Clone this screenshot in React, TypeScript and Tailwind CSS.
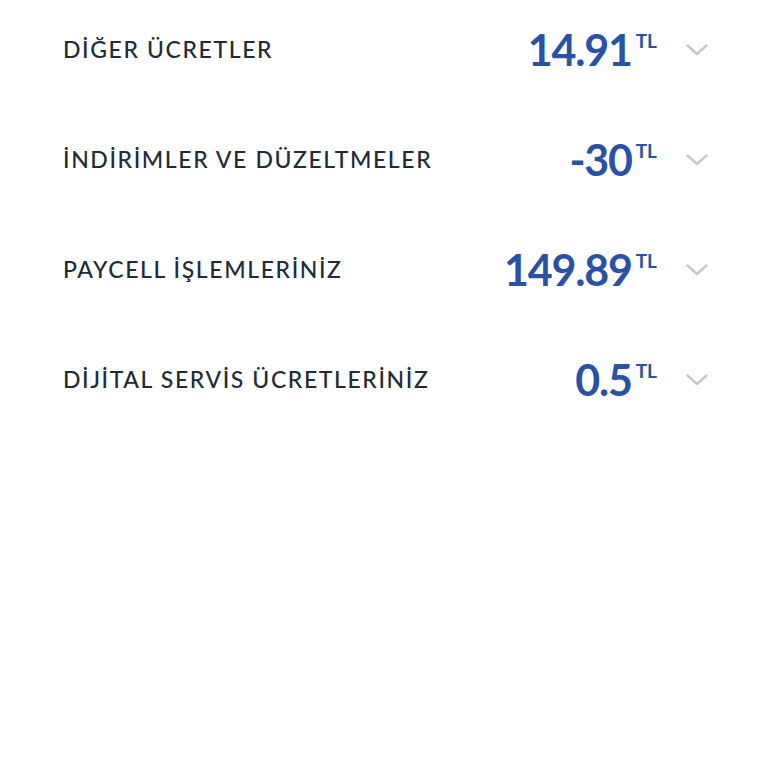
const rows = [
  { label: "DİĞER ÜCRETLER", amount: "14.91" },
  { label: "İNDİRİMLER VE DÜZELTMELER", amount: "-30" },
  { label: "PAYCELL İŞLEMLERİNİZ", amount: "149.89" },
  { label: "DİJİTAL SERVİS ÜCRETLERİNİZ", amount: "0.5" },
];

function Chevron() {
  return (
    <svg width="22" height="12" viewBox="0 0 22 12" className="ml-[29px] mt-[2px]">
      <polyline
        points="1.5,1.5 11,10 20.5,1.5"
        fill="none"
        stroke="#c8c8c8"
        strokeWidth="2.4"
        strokeLinecap="round"
        strokeLinejoin="round"
      />
    </svg>
  );
}

export default function App() {
  return (
    <div
      className="w-[768px] h-[768px] bg-white"
      style={{ fontFamily: "Lato, 'Open Sans', sans-serif" }}
    >
      <div className="flex flex-col gap-[12px] pl-[63px] pr-[60px]">
        {rows.map((row) => (
          <div key={row.label} className="flex items-center h-[98px]">
            <span className="flex-1 text-[23px] tracking-[1.6px] text-[#222b38] font-medium">
              {row.label}
            </span>
            <div className="flex items-start">
              <span className="text-[43px] leading-none font-bold text-[#2852a6] tracking-[-1.2px]">
                {row.amount}
              </span>
              <span className="ml-[4px] mt-[3px] text-[19px] leading-none font-bold text-[#2852a6]">
                TL
              </span>
            </div>
            <Chevron />
          </div>
        ))}
      </div>
    </div>
  );
}
